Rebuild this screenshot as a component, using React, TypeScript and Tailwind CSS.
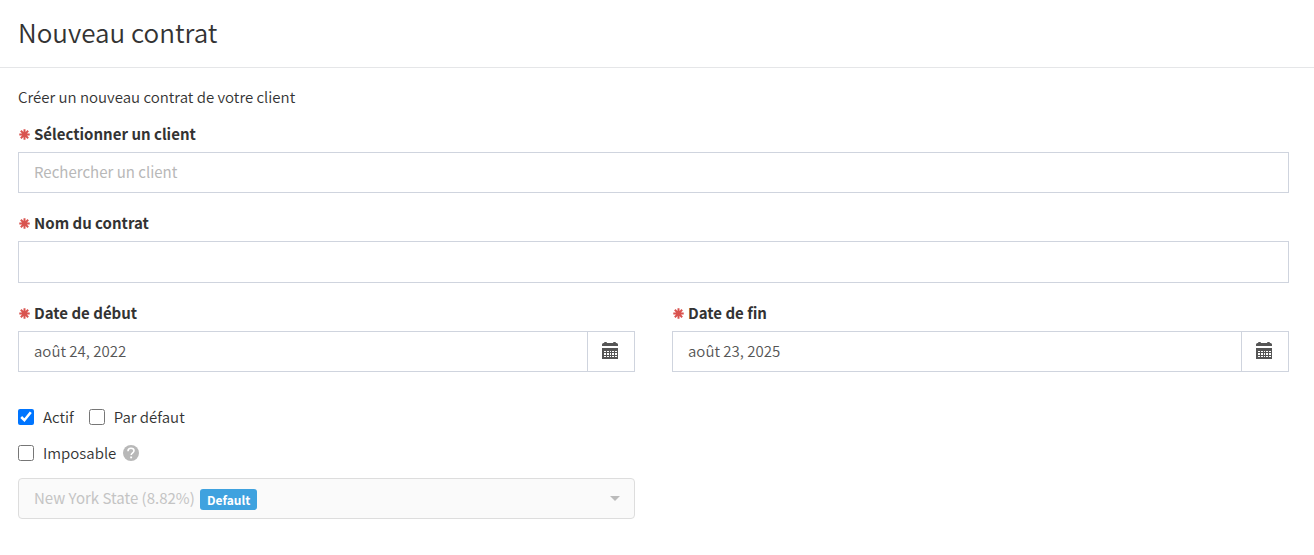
import { useId, useState } from 'react';
import type { ReactNode } from 'react';

function Asterisk() {
  return (
    <svg viewBox="0 0 20 20" className="size-[11px] shrink-0 text-[#d9534f]" fill="none" stroke="currentColor" aria-hidden="true">
      <circle cx="10" cy="10" r="5" fill="currentColor" stroke="none" />
      <path strokeWidth="3.6" d="M10 0.5v19M0.500 10h19M3.300 3.300l13.400 13.400M16.700 3.300L3.300 16.700" />
    </svg>
  );
}

function CalendarIcon() {
  return (
    <svg viewBox="0 0 16 17" className="h-[17px] w-4" fill="#555555" aria-hidden="true">
      <path d="M0 4V2.500Q0 1 1.500 1H2Q2 0 3 0h1q1 0 1 1h6q0-1 1-1h1q1 0 1 1h.500Q16 1 16 2.500V4z" />
      <path
        fillRule="evenodd"
        d="M0 6h16v11H0zM2 9v1h2V9zm3 0v1h2V9zm3 0v1h1V9zm2 0v1h2V9zm3 0v1h2V9zM2 11v2h2v-2zm3 0v2h2v-2zm3 0v2h1v-2zm2 0v2h2v-2zm3 0v2h2v-2zM2 14v1h2v-1zm3 0v1h2v-1zm3 0v1h1v-1zm2 0v1h2v-1zm3 0v1h2v-1z"
      />
    </svg>
  );
}

function HelpIcon() {
  return (
    <svg viewBox="0 0 16 16" className="size-4" aria-hidden="true">
      <circle cx="8" cy="8" r="8" fill="#b8b8b8" />
      <path d="M5 6.200c0-1.900 1.300-2.900 3-2.900s3 .900 3 2.500c0 2-2.800 2.100-2.800 4.300" fill="none" stroke="#fff" strokeWidth="1.600" />
      <path d="M7.200 11.500h1.900v1.800H7.200z" fill="#fff" />
    </svg>
  );
}

function Field({ id, label, children }: { id: string; label: string; children: ReactNode }) {
  return (
    <div className="flex flex-col gap-2">
      <label htmlFor={id} className="flex items-center gap-1 pl-px font-bold text-[#333333]">
        <Asterisk />
        {label}
      </label>
      {children}
    </div>
  );
}

function DateField({ label, initial }: { label: string; initial: string }) {
  const id = useId();
  const [value, setValue] = useState(initial);
  return (
    <Field id={id} label={label}>
      <div className="flex h-[41px] border border-[#cfd4de]">
        <input
          id={id}
          type="text"
          value={value}
          onChange={(e) => setValue(e.target.value)}
          className="min-w-0 flex-1 px-[15px] pb-0.5 text-[#555555] outline-none"
        />
        <button
          type="button"
          aria-label="Ouvrir le calendrier"
          className="flex w-[47px] items-center justify-center border-l border-[#cfd4de] pr-0.5 pb-0.5"
        >
          <CalendarIcon />
        </button>
      </div>
    </Field>
  );
}

function Check({ label, checked = false }: { label: string; checked?: boolean }) {
  return (
    <label className="flex items-center gap-[9px]">
      <input type="checkbox" defaultChecked={checked} className="size-4" />
      {label}
    </label>
  );
}

export default function App() {
  return (
    <div className="min-h-screen bg-white font-['Noto_Sans_CJK_SC','Noto_Sans',sans-serif] text-[15px] leading-5 font-[350] text-[#333333]">
      <header className="border-b border-[#e5e6e8] px-[18px] pt-3.5 pb-[18px]">
        <h1 className="text-[26px] leading-[35px] font-[350]">Nouveau contrat</h1>
      </header>
      <form className="flex flex-col pt-[19px] pr-[25px] pb-9 pl-[18px]" onSubmit={(e) => e.preventDefault()}>
        <p className="mb-[17px]">Créer un nouveau contrat de votre client</p>
        <div className="flex flex-col gap-5">
          <Field id="client" label="Sélectionner un client">
            <input
              id="client"
              type="text"
              placeholder="Rechercher un client"
              className="h-[41px] w-full border border-[#cfd4de] px-[15px] pb-0.5 font-normal text-[#555555] placeholder:text-[#b8b8b8]"
            />
          </Field>
          <Field id="contract" label="Nom du contrat">
            <input id="contract" type="text" className="h-[42px] w-full border border-[#cfd4de] px-[15px] pb-0.5 text-[#555555]" />
          </Field>
          <div className="grid grid-cols-2 gap-[37px]">
            <DateField label="Date de début" initial="août 24, 2022" />
            <DateField label="Date de fin" initial="août 23, 2025" />
          </div>
        </div>
        <div className="mt-[35px] flex gap-[15px]">
          <Check label="Actif" checked />
          <Check label="Par défaut" />
        </div>
        <div className="mt-4 flex items-center gap-[7px]">
          <Check label="Imposable" />
          <button type="button" aria-label="Aide">
            <HelpIcon />
          </button>
        </div>
        <div className="mt-[15px] grid grid-cols-2 gap-[37px]">
          <div className="relative">
            <select
              disabled
              aria-label="Taxe"
              className="h-[41px] w-full appearance-none rounded border border-[#dddddd] bg-[#fafafa] px-[15px] pb-0.5 font-normal text-[#c4c4c4] opacity-100"
            >
              <option>New York State (8.82%)</option>
            </select>
            <span className="absolute top-[11px] left-[182px] rounded-[3px] bg-[#3fa2df] px-[7px] text-xs leading-[21px] font-bold text-white">
              Default
            </span>
            <svg viewBox="0 0 10 5" className="absolute top-[18px] right-[15px] h-[5px] w-2.5" fill="#bbbbbb" aria-hidden="true">
              <path d="M0 0h10L5 5z" />
            </svg>
          </div>
        </div>
      </form>
    </div>
  );
}
